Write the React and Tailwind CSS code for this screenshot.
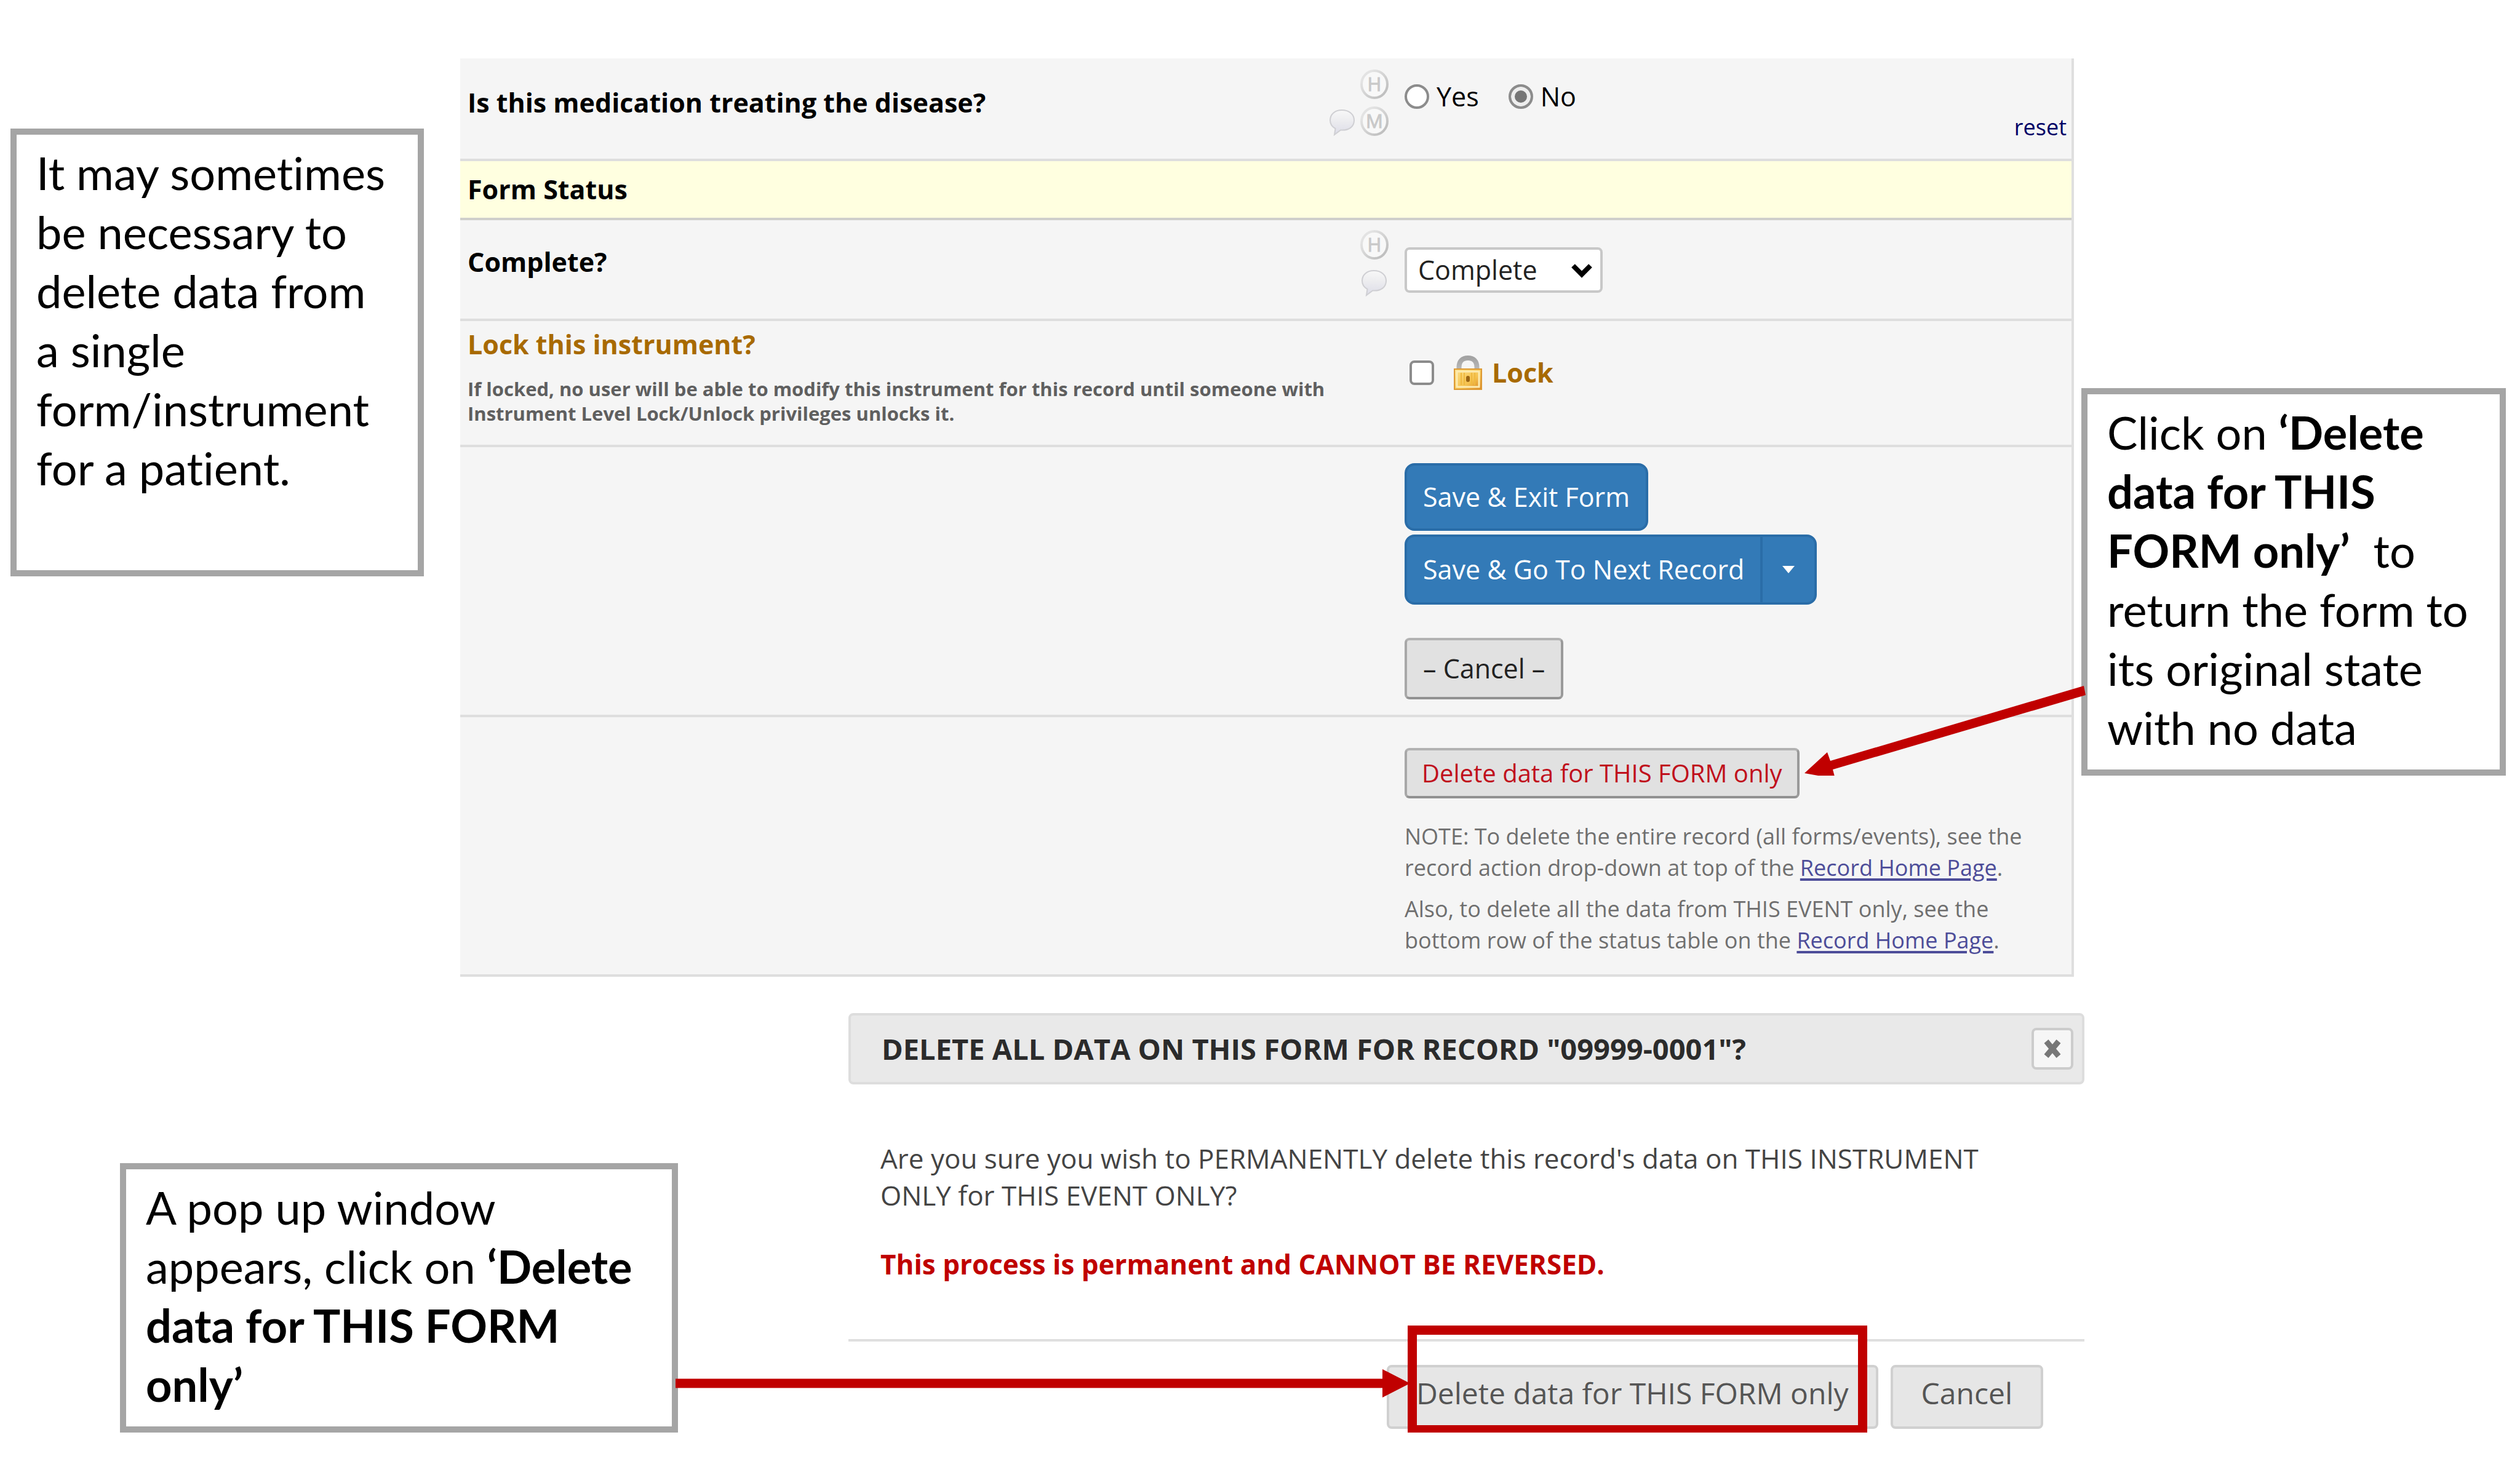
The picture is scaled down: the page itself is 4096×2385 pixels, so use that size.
import React from "react";

const OPEN = "font-['Open_Sans','Noto_Sans',sans-serif]";

function LetterBadge({ letter }) {
  return (
    <svg viewBox="0 0 46 48" className="h-12 w-[46px]" aria-hidden="true">
      <defs>
        <linearGradient id={"ring" + letter} x1="0" y1="0" x2="1" y2="1">
          <stop offset="0.2" stopColor="#e3e3e3" />
          <stop offset="1" stopColor="#b8b8b8" />
        </linearGradient>
      </defs>
      <ellipse cx="23" cy="24" rx="21" ry="22" fill="#f8f8f8" stroke={"url(#ring" + letter + ")"} strokeWidth="4" />
      <text
        x="23"
        y="35"
        textAnchor="middle"
        fontFamily="Open Sans, sans-serif"
        fontSize="31"
        fill="#c9c9c9"
        stroke="#c9c9c9"
        strokeWidth="1"
      >
        {letter}
      </text>
    </svg>
  );
}

function Bubble() {
  return (
    <svg viewBox="0 0 46 48" className="h-12 w-[46px]" aria-hidden="true">
      <defs>
        <linearGradient id="bubble" x1="0" y1="0" x2="0" y2="1">
          <stop offset="0" stopColor="#f8f8f8" />
          <stop offset="0.45" stopColor="#ececef" />
          <stop offset="1" stopColor="#dcdce8" />
        </linearGradient>
      </defs>
      <path
        d="M22 6C10.500 6 3 13 3 22.500c0 6 3 10.500 8.500 13.500L10 46 20 38.500c14 1 22-6 22-16C42 13 34 6 22 6Z"
        fill="url(#bubble)"
        stroke="#cfcfd3"
        strokeWidth="2"
      />
    </svg>
  );
}

function Padlock() {
  return (
    <svg viewBox="0 0 46 56" className="h-14 w-[46px]" aria-hidden="true">
      <defs>
        <linearGradient id="body" x1="0" y1="0" x2="1" y2="1">
          <stop offset="0" stopColor="#fbe08a" />
          <stop offset="0.6" stopColor="#f5c24f" />
          <stop offset="1" stopColor="#d98420" />
        </linearGradient>
        <linearGradient id="shackle" x1="0" y1="0" x2="0" y2="1">
          <stop offset="0" stopColor="#a3a3a3" />
          <stop offset="1" stopColor="#bdbdbd" />
        </linearGradient>
      </defs>
      <path d="M8.500 26V19C8.500 9 14 4 23 4s14.500 5 14.500 15v7" fill="none" stroke="url(#shackle)" strokeWidth="8" />
      <rect x="1" y="22" width="44" height="33" fill="url(#body)" stroke="#dd9a35" strokeWidth="2" />
      <rect x="5" y="26" width="36" height="25" fill="none" stroke="#fdebb0" strokeWidth="3" />
      <path d="M12 28v20M17 28v20M29 28v20M34 28v20" stroke="#efb93f" strokeWidth="2" />
      <rect x="20" y="33" width="6" height="10" rx="3" fill="#9a6412" />
    </svg>
  );
}

function Row({ label, icons, children }) {
  return (
    <div className="flex border-b-4 border-[#dedede]">
      <div className="flex-1 pl-3">{label}</div>
      <div className="flex w-[100px] flex-col items-end">{icons}</div>
      <div className="w-[1110px] pl-[26px]">{children}</div>
    </div>
  );
}

function Callout({ className, children }) {
  return (
    <aside
      className={
        "relative z-10 shrink-0 border-10 border-[#a5a5a5] bg-white pt-[14px] pb-5 pl-8 font-['Lato','Carlito',sans-serif] text-[74px] leading-[96px] text-black [font-variant-ligatures:none] " +
        className
      }
    >
      {children}
    </aside>
  );
}

const blueButton = "border-4 border-[#2a6da8] bg-[#337ab7] text-[43px] leading-[60px] text-white";
const greyButton =
  "rounded-lg border-4 border-t-[#b2b2b2] border-r-[#9a9a9a] border-b-[#929292] border-l-[#a8a8a8] bg-[#e1e1e1]";
const dialogButton =
  "h-[104px] rounded-lg border-4 border-[#d0d0d0] bg-[#e6e6e6] pb-3 text-[48px] leading-[60px] text-[#555]";
const radio =
  "size-10 appearance-none rounded-full border-4 border-[#8c8c8c] bg-white checked:bg-[#767676] checked:shadow-[inset_0_0_0_6px_#eeeeee]";

function RecordForm() {
  return (
    <form
      onSubmit={(e) => e.preventDefault()}
      className={OPEN + " min-w-0 flex-1 border-r-4 border-[#dfdfdf] bg-[#f5f5f5] text-[43px] leading-[60px] text-black"}
    >
      <Row
        label={<div className="pt-[42px] font-bold">Is this medication treating the disease?</div>}
        icons={
          <div className="flex flex-col items-end gap-3 pt-[18px]">
            <LetterBadge letter="H" />
            <div className="flex gap-[6px]">
              <Bubble />
              <LetterBadge letter="M" />
            </div>
          </div>
        }
      >
        <div className="flex h-[163px] flex-col pr-2">
          <div className="flex gap-12 pt-[32px]">
            <label className="flex items-center gap-3">
              <input type="radio" name="treating" className={radio} />
              Yes
            </label>
            <label className="flex items-center gap-3">
              <input type="radio" name="treating" defaultChecked className={radio} />
              No
            </label>
          </div>
          <a href="#reset" className="self-end text-[36px] leading-[40px] text-[#000066]">
            reset
          </a>
        </div>
      </Row>

      <h2 className="border-b-4 border-[#cfcfcb] bg-[#ffffe0] py-4 pl-3 font-bold">Form Status</h2>

      <Row
        label={
          <label htmlFor="complete" className="block pt-[38px] font-bold">
            Complete?
          </label>
        }
        icons={
          <div className="flex flex-col items-end gap-3 pt-4">
            <LetterBadge letter="H" />
            <Bubble />
          </div>
        }
      >
        <div className="h-[160px] pt-[44px]">
          <div className="relative w-[322px]">
            <select
              id="complete"
              className="block h-[74px] w-full appearance-none rounded-lg border-4 border-[#c8c8c8] bg-white pl-[18px] text-[43px] leading-[60px] text-[#222]"
            >
              <option>Complete</option>
            </select>
            <svg viewBox="0 0 36 24" className="pointer-events-none absolute top-[26px] right-4 h-6 w-9" aria-hidden="true">
              <path d="M4 4l14 14L32 4" fill="none" stroke="#000" strokeWidth="8" />
            </svg>
          </div>
        </div>
      </Row>

      <Row
        label={
          <div className="pt-2 pb-[31px] font-bold">
            <div className="text-[#a86a00]">Lock this instrument?</div>
            <p className="pt-[22px] text-[31px] leading-[40px] text-[#5f5f5f]">
              If locked, no user will be able to modify this instrument for this record until someone with Instrument
              Level Lock/Unlock privileges unlocks it.
            </p>
          </div>
        }
      >
        <label className="flex w-fit items-center pt-[54px] pl-2 font-bold text-[#a86a00]">
          <input type="checkbox" className="size-10 appearance-none rounded-lg border-4 border-[#8c8c8c] bg-white" />
          <span className="pr-4 pl-8">
            <Padlock />
          </span>
          Lock
        </label>
      </Row>

      <Row>
        <div className="flex flex-col items-start pt-[26px] pb-[25px]">
          <button className={blueButton + " h-[110px] rounded-2xl px-[26px]"}>Save &amp; Exit Form</button>
          <div className="flex pt-[6px]">
            <button className={blueButton + " h-[114px] rounded-l-2xl border-r-2 px-[26px]"}>Save &amp; Go To Next Record</button>
            <button aria-label="More save options" className={blueButton + " h-[114px] rounded-r-2xl border-l-2 px-8"}>
              <svg viewBox="0 0 20 12" className="h-3 w-5" aria-hidden="true">
                <path d="M0 0h20L10 12z" fill="#fff" />
              </svg>
            </button>
          </div>
          <div className="pt-[54px]">
            <button className={greyButton + " h-[100px] px-[26px] text-[#222]"}>– Cancel –</button>
          </div>
        </div>
      </Row>

      <Row>
        <div className="pt-[50px] pb-[30px]">
          <button className={greyButton + " h-[82px] px-6 text-[40px] leading-[60px] text-[#c0101c]"}>
            Delete data for THIS FORM only
          </button>
          <div className="flex max-w-[1030px] flex-col gap-4 pt-[36px] text-[36px] leading-[51px] text-[#6f6f6f]">
            <p>
              NOTE: To delete the entire record (all forms/events), see the record action drop-down at top of the{" "}
              <a href="#home" className="text-[#4d4d99] underline decoration-4 underline-offset-4">Record Home Page</a>.
            </p>
            <p>
              Also, to delete all the data from THIS EVENT only, see the bottom row of the status table on the{" "}
              <a href="#home" className="text-[#4d4d99] underline decoration-4 underline-offset-4">Record Home Page</a>.
            </p>
          </div>
        </div>
      </Row>
    </form>
  );
}

function DeleteDialog() {
  return (
    <section role="dialog" aria-labelledby="dialog-title" className={OPEN + " min-w-0 flex-1 text-[44px] leading-[60px] text-[#444]"}>
      <header className="flex h-[116px] items-center justify-between rounded-lg border-4 border-[#dddddd] bg-[#e9e9e9] pr-[14px] pl-[50px]">
        <h2 id="dialog-title" className="text-[47px] font-bold text-[#2b2b2b]">
          DELETE ALL DATA ON THIS FORM FOR RECORD "09999-0001"?
        </h2>
        <button aria-label="Close" className="flex size-[68px] items-center justify-center rounded-lg border-4 border-[#cccccc] bg-[#f6f6f6]">
          <svg viewBox="0 0 30 32" className="h-8 w-[30px]" aria-hidden="true">
            <path d="M5 4l20 24M25 4L5 28" stroke="#777" strokeWidth="9" />
          </svg>
        </button>
      </header>
      <div className="px-[52px] pt-[90px] pb-[92px]">
        <p>
          Are you sure you wish to PERMANENTLY delete this record's data on THIS INSTRUMENT
          <br />
          ONLY for THIS EVENT ONLY?
        </p>
        <p className="pt-[52px] font-bold text-[#c00000]">This process is permanent and CANNOT BE REVERSED.</p>
      </div>
      <footer className="flex justify-end gap-5 border-t-4 border-[#dfdfdf] pt-[38px] pr-[67px]">
        <div className="relative">
          <button className={dialogButton + " px-11"}>Delete data for THIS FORM only</button>
          <div className="pointer-events-none absolute -top-16 right-[18px] left-[34px] h-[177px] border-15 border-[#c00000]" />
        </div>
        <button className={dialogButton + " px-[46px]"}>Cancel</button>
      </footer>
    </section>
  );
}

export default function App() {
  return (
    <main className="w-full bg-white">
      <div className="flex items-start pt-[95px] pr-[23px] pl-[17px]">
        <Callout className="mt-[114px] mr-[59px] min-h-[728px] w-[672px]">
          It may sometimes
          <br />
          be necessary to
          <br />
          delete data from
          <br />
          a single
          <br />
          form/instrument
          <br />
          for a patient.
        </Callout>
        <RecordForm />
        <Callout className="mt-[536px] ml-3 w-[690px]">
          Click on <b>‘Delete</b>
          <br />
          <b>data for THIS</b>
          <br />
          <b>FORM only’</b>&nbsp; to
          <br />
          return the form to
          <br />
          its original state
          <br />
          with no data
          <svg viewBox="0 0 460 160" className="absolute top-[460px] -left-[460px] h-[160px] w-[460px]" aria-hidden="true">
            <path d="M454 14L457 29L46 150L50 165L0 156L37 122L42 136Z" fill="#c00000" />
          </svg>
        </Callout>
      </div>

      <div className="flex items-start pt-[59px] pr-[708px] pl-[195px]">
        <Callout className="mt-[244px] mr-[277px] w-[907px]">
          A pop up window
          <br />
          appears, click on <b>‘Delete</b>
          <br />
          <b>data for THIS FORM</b>
          <br />
          <b>only’</b>
          <svg viewBox="0 0 1194 46" className="absolute top-[325px] left-[893px] h-[46px] w-[1194px]" aria-hidden="true">
            <path d="M0 15.500H1149V0L1194 23L1149 46V30.500H0Z" fill="#c00000" />
          </svg>
        </Callout>
        <DeleteDialog />
      </div>
    </main>
  );
}
